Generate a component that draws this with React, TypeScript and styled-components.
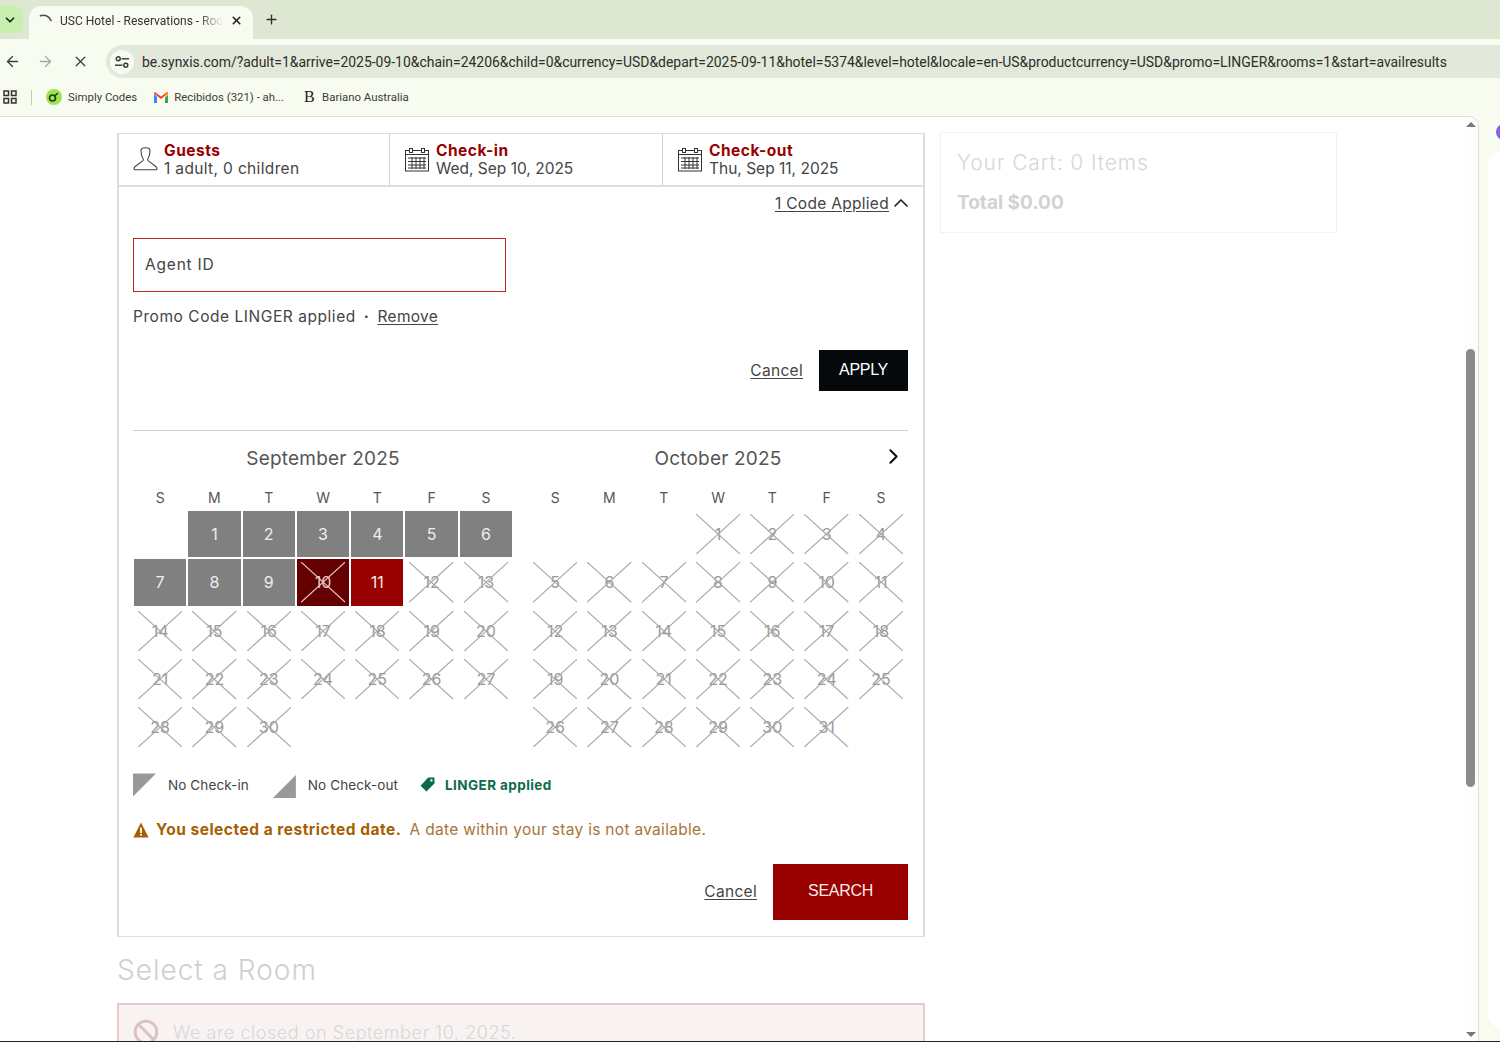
import React from 'react';
import { ArrowLeft, ArrowRight, Ban, ChevronDown, ChevronRight, ChevronUp, Plus, X } from 'lucide-react';
import styled, { createGlobalStyle } from 'styled-components';

const GlobalStyle = createGlobalStyle`
  html, body {
    margin: 0;
    padding: 0;
    background: #fff;
    overflow: hidden;
  }
  * {
    box-sizing: border-box;
  }
`;

const CHROME_FONT = `Roboto, 'Open Sans', sans-serif`;
const PAGE_FONT = `Inter, 'Open Sans', sans-serif`;

const WEEKDAYS = ['S', 'M', 'T', 'W', 'T', 'F', 'S'];

type DayKind = 'open' | 'blocked' | 'restricted' | 'selected';

interface IDay {
  day: number;
  kind: DayKind;
}

const septemberKind = (day: number): DayKind => {
  if (day === 10) return 'restricted';
  if (day === 11) return 'selected';
  return day < 10 ? 'open' : 'blocked';
};

const september: IDay[] = Array.from({ length: 30 }, (_, i) => ({
  day: i + 1,
  kind: septemberKind(i + 1),
}));

const october: IDay[] = Array.from({ length: 31 }, (_, i) => ({
  day: i + 1,
  kind: 'blocked' as DayKind,
}));

const CalendarIcon = () => (
  <svg width="24" height="24" viewBox="0 0 24 24" fill="none" stroke="#333" strokeWidth="1">
    <rect x="0.5" y="2.5" width="23" height="20.5" />
    <line x1="0.5" y1="6.5" x2="23.5" y2="6.5" />
    <rect x="4.5" y="0.5" width="3" height="4" fill="#fff" />
    <rect x="16.5" y="0.5" width="3" height="4" fill="#fff" />
    <path d="M3 10h18M3 13.5h18M3 17h18M3 20h18M7 9v12M11 9v12M15 9v12M19 9v12" />
  </svg>
);

const PersonIcon = () => (
  <svg width="25" height="25" viewBox="0 0 25 25" fill="none" stroke="#444" strokeWidth="1.1">
    <path d="M8 3.5C8 1.8 10 .8 12.5 .8S17 1.8 17 3.5c0 3.5-.6 6.2-2 8.2-.5.8-.4 1.6.3 2.2l7.5 5.6c1.1.9 1.2 2.5.7 3.3H1.5c-.5-.8-.4-2.4.7-3.3l7.5-5.6c.7-.6.8-1.4.3-2.2-1.4-2-2-4.7-2-8.2z" />
  </svg>
);

const TagIcon = () => (
  <svg width="15" height="15" viewBox="0 0 15 15" fill="#0b6b4a">
    <path d="M8.2.6 14.4.4l.2 5.8L6.5 14.5.6 8.7zM11.4 2.2a1.2 1.2 0 1 0 0 2.4 1.2 1.2 0 0 0 0-2.4z" />
  </svg>
);

const WarningIcon = () => (
  <svg width="16" height="16" viewBox="0 0 16 16">
    <path d="M8 .6 15.6 15.6H.4z" fill="#a65f00" />
    <rect x="7.1" y="5.6" width="1.8" height="5.4" fill="#fff" />
    <rect x="7.1" y="11.9" width="1.8" height="1.8" fill="#fff" />
  </svg>
);

const TuneIcon = () => (
  <svg width="14" height="12" viewBox="0 0 14 12" fill="none" stroke="#333" strokeWidth="1.4">
    <circle cx="3.2" cy="2.8" r="2" />
    <line x1="6.5" y1="2.8" x2="14" y2="2.8" />
    <circle cx="10.8" cy="9.2" r="2" />
    <line x1="0" y1="9.2" x2="7.5" y2="9.2" />
  </svg>
);

const AppsIcon = () => (
  <svg width="14" height="14" viewBox="0 0 14 14" fill="none" stroke="#333" strokeWidth="1.5">
    <rect x="1" y="1" width="4.5" height="4.5" />
    <rect x="8.5" y="1" width="4.5" height="4.5" />
    <rect x="1" y="8.5" width="4.5" height="4.5" />
    <rect x="8.5" y="8.5" width="4.5" height="4.5" />
  </svg>
);

const GmailIcon = () => (
  <svg width="14" height="11" viewBox="0 0 14 11">
    <path d="M0 2v9h3V4.5z" fill="#4285f4" />
    <path d="M14 2v9h-3V4.5z" fill="#34a853" />
    <path d="M0 1.5 7 7l7-5.5V.8C14 .2 13 0 12.4.4L7 4.5 1.6.4C1 0 0 .2 0 .8z" fill="#ea4335" />
    <path d="M11 2.5V5.8L14 3.5V1.5z" fill="#fbbc04" />
  </svg>
);

const SimplyCodesIcon = () => (
  <svg width="16" height="16" viewBox="0 0 16 16">
    <circle cx="8" cy="8" r="8" fill="#9ee44f" />
    <circle cx="6.5" cy="9" r="3" fill="none" stroke="#1d3b12" strokeWidth="1.6" />
    <path d="M8 7.5 12 4" stroke="#1d3b12" strokeWidth="1.6" fill="none" />
  </svg>
);

const Spinner = () => (
  <svg width="14" height="14" viewBox="0 0 14 14" fill="none" stroke="#4a4f48" strokeWidth="1.6">
    <path d="M1.5 1.8C5 .4 10 1.5 12 6.5" strokeLinecap="round" />
  </svg>
);

const DayCell: React.FC<IDay> = ({ day, kind }) => (
  <Cell>
    <CellFace $kind={kind}>
      {(kind === 'blocked' || kind === 'restricted') && (
        <Cross viewBox="0 0 100 100" preserveAspectRatio="none" $kind={kind}>
          <line x1="0" y1="0" x2="100" y2="100" vectorEffect="non-scaling-stroke" />
          <line x1="100" y1="0" x2="0" y2="100" vectorEffect="non-scaling-stroke" />
        </Cross>
      )}
      {day}
    </CellFace>
  </Cell>
);

const MonthGrid: React.FC<{ days: IDay[]; offset: number }> = ({ days, offset }) => (
  <>
    <WeekdayRow>
      {WEEKDAYS.map((name, i) => (
        <Weekday key={i}>{name}</Weekday>
      ))}
    </WeekdayRow>
    <Grid>
      {Array.from({ length: offset }, (_, i) => (
        <Cell key={`blank-${i}`} />
      ))}
      {days.map(d => (
        <DayCell key={d.day} day={d.day} kind={d.kind} />
      ))}
    </Grid>
  </>
);

export default function App() {
  return (
    <Screen>
      <GlobalStyle />
      <TabStrip>
        <TabSearch>
          <ChevronDown size={14} strokeWidth={3} />
        </TabSearch>
        <Tab>
          <Spinner />
          <TabTitle>USC Hotel - Reservations - Rooms</TabTitle>
          <X size={13} strokeWidth={3} color="#222" />
        </Tab>
        <NewTab>
          <Plus size={15} strokeWidth={2.2} />
        </NewTab>
      </TabStrip>

      <Toolbar>
        <BackButton>
          <ArrowLeft size={17} strokeWidth={1.8} />
        </BackButton>
        <ForwardButton>
          <ArrowRight size={17} strokeWidth={1.8} />
        </ForwardButton>
        <StopButton>
          <X size={17} strokeWidth={1.8} />
        </StopButton>
        <Omnibox>
          <SiteInfo>
            <TuneIcon />
          </SiteInfo>
          <Url>
            be.synxis.com/?adult=1&amp;arrive=2025-09-10&amp;chain=24206&amp;child=0&amp;currency=USD&amp;depart=2025-09-11&amp;hotel=5374&amp;level=hotel&amp;locale=en-US&amp;productcurrency=USD&amp;promo=LINGER&amp;rooms=1&amp;start=availresults
          </Url>
        </Omnibox>
      </Toolbar>

      <Bookmarks>
        <AppsIcon />
        <BookmarkDivider />
        <Bookmark>
          <SimplyCodesIcon />
          Simply Codes
        </Bookmark>
        <Bookmark>
          <GmailIcon />
          Recibidos (321) - ah...
        </Bookmark>
        <Bookmark>
          <SerifB>B</SerifB>
          Bariano Australia
        </Bookmark>
      </Bookmarks>

      <Body>
        <Viewport>
          <Page>
            <Main>
              <Panel>
                <Summary>
                  <GuestsItem>
                    <PersonIcon />
                    <SummaryText>
                      <SummaryLabel>Guests</SummaryLabel>
                      <SummaryValue>1 adult, 0 children</SummaryValue>
                    </SummaryText>
                  </GuestsItem>
                  <DateItem $width={273}>
                    <CalendarIcon />
                    <SummaryText>
                      <SummaryLabel>Check-in</SummaryLabel>
                      <SummaryValue $tight>Wed, Sep 10, 2025</SummaryValue>
                    </SummaryText>
                  </DateItem>
                  <DateItem>
                    <CalendarIcon />
                    <SummaryText>
                      <SummaryLabel>Check-out</SummaryLabel>
                      <SummaryValue $tight>Thu, Sep 11, 2025</SummaryValue>
                    </SummaryText>
                  </DateItem>
                </Summary>

                <PanelBody>
                  <CodeToggle>
                    <TextLink>1 Code Applied</TextLink>
                    <ToggleChevron>
                      <ChevronUp size={24} strokeWidth={1.7} color="#222" />
                    </ToggleChevron>
                  </CodeToggle>

                  <AgentInput>Agent ID</AgentInput>

                  <PromoLine>
                    Promo Code LINGER applied
                    <PromoDot>·</PromoDot>
                    <TextLink>Remove</TextLink>
                  </PromoLine>

                  <ApplyRow>
                    <TextLink>Cancel</TextLink>
                    <ApplyButton>APPLY</ApplyButton>
                  </ApplyRow>

                  <Divider />

                  <Months>
                    <Month>
                      <MonthHeader>
                        <span />
                        <MonthTitle>September 2025</MonthTitle>
                        <span />
                      </MonthHeader>
                      <MonthGrid days={september} offset={1} />
                    </Month>
                    <Month>
                      <MonthHeader>
                        <span />
                        <MonthTitle>October 2025</MonthTitle>
                        <NextMonth>
                          <ChevronRight size={25} strokeWidth={2} color="#111" />
                        </NextMonth>
                      </MonthHeader>
                      <MonthGrid days={october} offset={3} />
                    </Month>
                  </Months>

                  <Legend>
                    <LegendItem>
                      <Triangle $corner="start" />
                      <LegendLabel>No Check-in</LegendLabel>
                    </LegendItem>
                    <LegendItem>
                      <Triangle $corner="end" />
                      <LegendLabel>No Check-out</LegendLabel>
                    </LegendItem>
                    <PromoLegend>
                      <TagIcon />
                      LINGER applied
                    </PromoLegend>
                  </Legend>

                  <Warning>
                    <WarningIcon />
                    <WarningTitle>You selected a restricted date.</WarningTitle>
                    <WarningText>A date within your stay is not available.</WarningText>
                  </Warning>

                  <SearchRow>
                    <TextLink>Cancel</TextLink>
                    <SearchButton>SEARCH</SearchButton>
                  </SearchRow>
                </PanelBody>
              </Panel>

              <RoomTitle>Select a Room</RoomTitle>
              <ClosedAlert>
                <Ban size={26} strokeWidth={2.6} color="#dcc0c2" />
                <ClosedText>We are closed on September 10, 2025.</ClosedText>
              </ClosedAlert>
            </Main>

            <Cart>
              <CartTitle>Your Cart: 0 Items</CartTitle>
              <CartTotal>Total $0.00</CartTotal>
            </Cart>
          </Page>

          <Scrollbar>
            <ArrowUp />
            <Track>
              <Thumb />
            </Track>
            <ArrowDown />
          </Scrollbar>
        </Viewport>

        <SidePanel>
          <ExtensionDot />
          <SideCard />
        </SidePanel>
      </Body>
    </Screen>
  );
}

const Screen = styled.div`
  width: 1500px;
  height: 1042px;
  display: flex;
  flex-direction: column;
  overflow: hidden;
  background: #f8fbf0;
  border-bottom: 1.5px solid #222;
  font-family: ${PAGE_FONT};
`;

const TabStrip = styled.div`
  height: 39px;
  flex: none;
  display: flex;
  align-items: flex-end;
  background: #dde7d1;
  font-family: ${CHROME_FONT};
`;

const TabSearch = styled.div`
  width: 23px;
  height: 27px;
  margin-bottom: 6px;
  display: flex;
  align-items: center;
  justify-content: center;
  padding-right: 3px;
  background: #c8eeb0;
  border-radius: 0 8px 8px 0;
  color: #222;
`;

const Tab = styled.div`
  width: 224px;
  height: 33px;
  margin-left: 6px;
  padding: 0 10px 4px 10px;
  display: flex;
  align-items: center;
  gap: 7px;
  background: #f8fbf0;
  border-radius: 12px 12px 0 0;
`;

const TabTitle = styled.div`
  flex: 1;
  overflow: hidden;
  white-space: nowrap;
  font-size: 12px;
  color: #333;
  mask-image: linear-gradient(to right, #000 85%, transparent);
`;

const NewTab = styled.div`
  margin: 0 0 12px 11px;
  display: flex;
  color: #333;
`;

const Toolbar = styled.div`
  height: 39px;
  flex: none;
  padding-top: 6px;
  display: flex;
  align-items: center;
  font-family: ${CHROME_FONT};
`;

const NavButton = styled.div`
  display: flex;
  justify-content: center;
  color: #3a3d38;
`;

const BackButton = styled(NavButton)`
  width: 24px;
`;

const ForwardButton = styled(NavButton)`
  width: 42px;
  color: #a3a8a0;
`;

const StopButton = styled(NavButton)`
  width: 29px;
`;

const Omnibox = styled.div`
  flex: 1;
  height: 33px;
  margin-left: 11px;
  padding-left: 4px;
  display: flex;
  align-items: center;
  background: #e3e9da;
  border-radius: 17px 0 0 17px;
`;

const SiteInfo = styled.div`
  width: 24px;
  height: 24px;
  flex: none;
  display: flex;
  align-items: center;
  justify-content: center;
  background: #f8fbf0;
  border-radius: 50%;
`;

const Url = styled.div`
  margin-left: 8px;
  white-space: nowrap;
  font-size: 13.93px;
  color: #2b2e29;
`;

const Bookmarks = styled.div`
  height: 38px;
  flex: none;
  padding-left: 3px;
  display: flex;
  align-items: center;
  font-family: ${CHROME_FONT};
`;

const BookmarkDivider = styled.div`
  width: 1px;
  height: 15px;
  margin: 0 14px;
  background: #b9d2a8;
`;

const Bookmark = styled.div`
  margin-right: 17px;
  display: flex;
  align-items: center;
  gap: 6px;
  font-size: 11.4px;
  color: #3a3d38;
`;

const SerifB = styled.span`
  width: 12px;
  margin-left: 3px;
  font-family: 'Liberation Serif', serif;
  font-size: 16px;
  color: #222;
`;

const Body = styled.div`
  flex: 1;
  min-height: 0;
  display: flex;
`;

const Viewport = styled.div`
  width: 1479px;
  display: flex;
  overflow: hidden;
  background: #fff;
  border-top: 1px solid #dcdfd6;
  border-right: 1px solid #dcdfd6;
  border-radius: 0 10px 0 0;
`;

const Page = styled.div`
  flex: 1;
  min-width: 0;
  padding: 16px 0 0 117px;
  display: flex;
  align-items: flex-start;
  gap: 15px;
`;

const Main = styled.div`
  width: 808px;
  flex: none;
`;

const Panel = styled.div`
  border: 2px solid #dedede;
  border-top-width: 1px;
  border-bottom-width: 1.5px;
`;

const Summary = styled.div`
  height: 53px;
  display: flex;
  border-bottom: 2px solid #dedede;
`;

const GuestsItem = styled.div`
  width: 270px;
  padding-left: 14px;
  display: flex;
  align-items: center;
  gap: 6px;
`;

const DateItem = styled.div<{ $width?: number }>`
  ${props => (props.$width ? `width: ${props.$width}px;` : 'flex: 1;')}
  padding-left: 15px;
  display: flex;
  align-items: center;
  gap: 7px;
  border-left: 1px solid #cfcfcf;
`;

const SummaryText = styled.div`
  display: flex;
  flex-direction: column;
  line-height: 18px;
  padding-top: 1px;
`;

const SummaryLabel = styled.div`
  font-size: 15.5px;
  font-weight: 700;
  letter-spacing: 0.5px;
  color: #990000;
`;

const SummaryValue = styled.div<{ $tight?: boolean }>`
  font-size: 15.5px;
  letter-spacing: ${props => (props.$tight ? '0' : '0.35px')};
  color: #444;
`;

const PanelBody = styled.div`
  padding: 0 15px 16px 14px;
`;

const CodeToggle = styled.div`
  height: 32px;
  display: flex;
  align-items: center;
  justify-content: flex-end;
`;

const ToggleChevron = styled.span`
  display: flex;
  margin-right: -5px;
`;

const TextLink = styled.span`
  font-size: 15.5px;
  letter-spacing: 0.3px;
  color: #444;
  text-decoration: underline;
  text-underline-offset: 2px;
`;

const AgentInput = styled.div`
  width: 373px;
  height: 54px;
  margin-top: 19px;
  padding: 0 0 2px 11px;
  display: flex;
  align-items: center;
  border: 1px solid #bf2227;
  font-size: 15.5px;
  letter-spacing: 0.8px;
  color: #444;
`;

const PromoLine = styled.div`
  margin-top: 14px;
  height: 20px;
  display: flex;
  align-items: center;
  font-size: 15.5px;
  letter-spacing: 0.55px;
  color: #444;
`;

const PromoDot = styled.span`
  margin: 0 8px;
  font-weight: 700;
`;

const ApplyRow = styled.div`
  margin-top: 24px;
  display: flex;
  align-items: center;
  justify-content: flex-end;
  gap: 16px;
`;

const ApplyButton = styled.div`
  width: 89px;
  height: 41px;
  padding-bottom: 2px;
  display: flex;
  align-items: center;
  justify-content: center;
  background: #05090c;
  color: #fff;
  font-family: 'Liberation Sans', Arial, sans-serif;
  font-size: 16px;
  letter-spacing: -0.3px;
`;

const Divider = styled.div`
  height: 1px;
  margin-top: 39px;
  background: #cfcfcf;
`;

const Months = styled.div`
  display: flex;
  gap: 15px;
`;

const Month = styled.div`
  width: 380px;
  flex: none;
`;

const MonthHeader = styled.div`
  height: 54px;
  display: grid;
  grid-template-columns: 1fr auto 1fr;
  align-items: center;
`;

const MonthTitle = styled.div`
  font-size: 19px;
  letter-spacing: 0.2px;
  color: #555;
`;

const NextMonth = styled.div`
  justify-self: end;
  margin: -3px 2px 0 0;
  display: flex;
`;

const WeekdayRow = styled.div`
  height: 24px;
  display: grid;
  grid-template-columns: repeat(7, 54.3px);
`;

const Grid = styled.div`
  margin-top: 1px;
  display: grid;
  grid-template-columns: repeat(7, 54.3px);
  grid-auto-rows: 48.3px;
`;

const Weekday = styled.div`
  display: flex;
  align-items: center;
  justify-content: center;
  font-size: 14px;
  color: #555;
`;

const Cell = styled.div`
  padding: 1px;
  display: flex;
`;

const cellBackground: Record<DayKind, string> = {
  open: '#808080',
  blocked: 'transparent',
  restricted: '#650000',
  selected: '#990000',
};

const cellColor: Record<DayKind, string> = {
  open: '#eee',
  blocked: '#999',
  restricted: '#e9c9c9',
  selected: '#f5e6e6',
};

const CellFace = styled.div<{ $kind: DayKind }>`
  position: relative;
  flex: 1;
  display: flex;
  align-items: center;
  justify-content: center;
  background: ${props => cellBackground[props.$kind]};
  color: ${props => cellColor[props.$kind]};
  font-size: 16px;
`;

const Cross = styled.svg<{ $kind: DayKind }>`
  position: absolute;
  left: 4px;
  top: 3px;
  width: calc(100% - 8px);
  height: calc(100% - 6px);
  stroke: ${props => (props.$kind === 'restricted' ? '#e9c9c9' : '#aaa')};
  stroke-width: 1.2px;
`;

const Legend = styled.div`
  margin-top: 18.5px;
  height: 30px;
  display: flex;
  align-items: center;
  font-size: 13.5px;
`;

const LegendItem = styled.div`
  display: flex;
  align-items: center;
  margin-right: 24px;
`;

const Triangle = styled.div<{ $corner: 'start' | 'end' }>`
  width: 23px;
  height: 23px;
  margin-top: ${props => (props.$corner === 'start' ? '0' : '3px')};
  background: #999;
  clip-path: ${props =>
    props.$corner === 'start'
      ? 'polygon(0 0, 100% 0, 0 100%)'
      : 'polygon(100% 0, 100% 100%, 0 100%)'};
`;

const LegendLabel = styled.span`
  margin-left: 12px;
  letter-spacing: 0.1px;
  color: #444;
`;

const PromoLegend = styled.div`
  margin-left: -2px;
  display: flex;
  align-items: center;
  gap: 10px;
  font-weight: 700;
  letter-spacing: 0.42px;
  color: #0b6b4a;
`;

const Warning = styled.div`
  margin-top: 20px;
  height: 20px;
  display: flex;
  align-items: center;
  gap: 7px;
  font-size: 15.5px;
  color: #a65f00;
`;

const WarningTitle = styled.strong`
  letter-spacing: 0.5px;
`;

const WarningText = styled.span`
  margin-left: 1px;
  letter-spacing: 0.3px;
  color: #a87438;
`;

const SearchRow = styled.div`
  margin-top: 24px;
  display: flex;
  align-items: center;
  justify-content: flex-end;
  gap: 16px;
`;

const SearchButton = styled.div`
  width: 135px;
  height: 56px;
  padding-bottom: 2px;
  display: flex;
  align-items: center;
  justify-content: center;
  background: #990000;
  color: #fbeaea;
  font-family: 'Liberation Sans', Arial, sans-serif;
  font-size: 16px;
  letter-spacing: -0.3px;
`;

const RoomTitle = styled.div`
  margin-top: 16px;
  font-size: 28px;
  font-weight: 300;
  letter-spacing: 1px;
  color: #cfcfcf;
`;

const ClosedAlert = styled.div`
  margin-top: 16px;
  height: 60px;
  padding: 14px 0 0 14px;
  display: flex;
  align-items: flex-start;
  gap: 14px;
  background: #f9f2f2;
  border: 2px solid #e2cbcd;
`;

const ClosedText = styled.span`
  margin-top: 3px;
  font-size: 18px;
  font-weight: 300;
  letter-spacing: 0.55px;
  color: #dad7d7;
`;

const Cart = styled.div`
  width: 397px;
  height: 101px;
  flex: none;
  margin-top: -1px;
  padding: 17px 0 0 16px;
  border: 1px solid #f3f3f3;
`;

const CartTitle = styled.div`
  font-size: 21px;
  font-weight: 300;
  letter-spacing: 0.9px;
  color: #d6d6d6;
`;

const CartTotal = styled.div`
  margin-top: 16px;
  font-size: 19px;
  font-weight: 700;
  color: #d2d2d2;
`;

const Scrollbar = styled.div`
  width: 15px;
  flex: none;
  display: flex;
  flex-direction: column;
  align-items: center;
  background: #fdfdfd;
  padding: 5px 0 4px;
`;

const ArrowUp = styled.div`
  width: 0;
  height: 0;
  border-left: 5px solid transparent;
  border-right: 5px solid transparent;
  border-bottom: 5px solid #777;
`;

const ArrowDown = styled.div`
  width: 0;
  height: 0;
  border-left: 5px solid transparent;
  border-right: 5px solid transparent;
  border-top: 5px solid #777;
`;

const Track = styled.div`
  flex: 1;
  padding-top: 222px;
`;

const Thumb = styled.div`
  width: 9px;
  height: 438px;
  border-radius: 5px;
  background: #8b8b8b;
`;

const SidePanel = styled.div`
  flex: 1;
  padding: 8px 0 0 9px;
  display: flex;
  flex-direction: column;
  overflow: hidden;
`;

const ExtensionDot = styled.div`
  width: 16px;
  height: 16px;
  margin-left: 8px;
  flex: none;
  border-radius: 50%;
  background: #8a5cf0;
`;

const SideCard = styled.div`
  width: 40px;
  height: 876px;
  margin-top: 12px;
  flex: none;
  background: #fff;
  border-radius: 14px;
`;
